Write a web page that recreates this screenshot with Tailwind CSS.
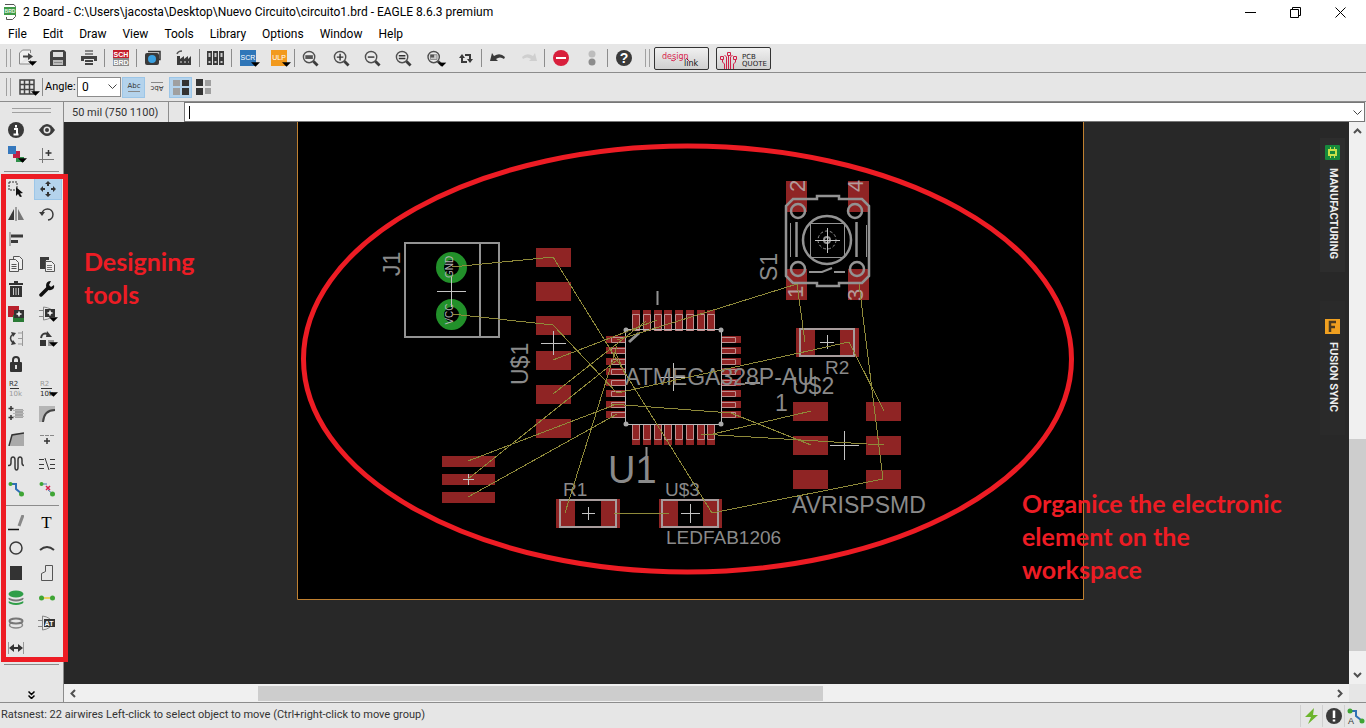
<!DOCTYPE html>
<html lang="en">
<head>
	<meta charset="UTF-8">
	<meta name="viewport" content="width=device-width, initial-scale=1.0">
	<title>2 Board - EAGLE 8.6.3 premium</title>
	<script src="https://cdn.jsdelivr.net/npm/@tailwindcss/browser@4"></script>
</head>
<body class="h-screen flex flex-col overflow-hidden bg-[#e6e6e6] text-black font-['Roboto',sans-serif] text-[12px]">

<!-- shared shapes -->
<svg class="hidden">
	<symbol id="drop" viewBox="0 0 10 5"><path d="M0 0h10L5 5z" fill="#000"/></symbol>
	<symbol id="lens" viewBox="0 0 18 18">
		<circle cx="7.500" cy="7.500" r="6" fill="#eaeaea" stroke="#505050" stroke-width="1.500"/>
		<path d="M12 12l4.500 4.500" stroke="#3c3c3c" stroke-width="3"/>
	</symbol>
</svg>

<!-- title bar -->
<header class="h-6 shrink-0 flex items-center bg-white pl-1">
	<svg class="w-3 h-4 mr-[7px]" viewBox="0 0 12 16"><path d="M1 .5h9l1.500 2v10l-3 3H2.500V13" fill="#fff" stroke="#555"/><path d="M0 3h12v8H0z" fill="#3f9a48"/><text x="6" y="9" font-size="5" font-weight="bold" fill="#e4f7e4" text-anchor="middle" font-family="Liberation Sans, sans-serif">BRD</text></svg>
	<h1 class="grow whitespace-pre">2 Board - C:\Users\jacosta\Desktop\Nuevo Circuito\circuito1.brd - EAGLE 8.6.3 premium</h1>
	<button aria-label="Minimize" class="w-[45px] h-6 flex items-center justify-center"><svg width="11" height="11"><path d="M0 5.500h11" stroke="#000"/></svg></button>
	<button aria-label="Restore" class="w-[45px] h-6 flex items-center justify-center"><svg width="11" height="11" fill="none" stroke="#000"><path d="M.5 2.500h8v8h-8zM2.500 2.500v-2h8v8h-2"/></svg></button>
	<button aria-label="Close" class="w-[45px] h-6 mr-[3px] flex items-center justify-center"><svg width="11" height="11" stroke="#000"><path d="M.5 .5l10 10M10.500 .5l-10 10"/></svg></button>
</header>

<nav class="h-5 shrink-0 flex items-center bg-white pl-2 gap-4">
	<a href="#">File</a>
	<a href="#">Edit</a>
	<a href="#">Draw</a>
	<a href="#">View</a>
	<a href="#">Tools</a>
	<a href="#">Library</a>
	<a href="#">Options</a>
	<a href="#">Window</a>
	<a href="#">Help</a>
</nav>

<!-- action toolbar -->
<div class="h-[29px] shrink-0 flex items-center border-b border-[#8c8c8c] *:shrink-0">
	<span class="ml-[6px] mr-0 w-[5px] h-[18px] border-x border-[#a0a0a0]"></span>
	<button aria-label="Open" class="w-[31px] pl-[3px] flex justify-center"><svg width="20" height="18" viewBox="0 0 20 18"><path d="M1.500 15V4l3-3h8v3M12.500 11v4h-11" fill="#f0f0f0" stroke="#888"/><path d="M5 6.500h5V4l5 3.500-5 3.500V8.500H5z" fill="#444"/><use href="#drop" x="10" y="12" width="9" height="5"/></svg></button>
	<button aria-label="Save" class="w-[31px] flex justify-center"><svg width="16" height="16"><path d="M0 2L2 0h12l2 2v14H0z" fill="#444"/><path d="M3 2h10v5H3z" fill="#ddd"/><path d="M3 10h10v5H3z" fill="#bbb"/><path d="M4 12.500h8" stroke="#888"/></svg></button>
	<button aria-label="Print" class="w-[31px] flex justify-center"><svg width="16" height="16"><path d="M4 1h8M4 4h8" stroke="#888" stroke-width="2"/><path d="M0 6h16v5h-3V9H3v2H0z" fill="#444"/><path d="M4 11h8M4 14h8" stroke="#444" stroke-width="2"/></svg></button>
	<span class="w-px h-[18px] bg-[#8c8c8c]"></span>
	<button aria-label="Schematic" class="w-[31px] flex justify-center"><svg width="16" height="16" font-family="Liberation Sans, sans-serif" font-size="7" font-weight="bold" fill="#fff" text-anchor="middle"><path d="M0 0h16v8H0z" fill="#c6202c"/><path d="M0 8h16v8H0z" fill="#8a8a8a"/><text x="8" y="7">SCH</text><text x="8" y="15">BRD</text></svg></button>
	<span class="w-px h-[18px] bg-[#8c8c8c]"></span>
	<button aria-label="CAM processor" class="w-[31px] flex justify-center"><svg width="16" height="16"><path d="M3 1.500h12v8h-2" fill="none" stroke="#333" stroke-width="1.500"/><rect y="3" width="14" height="12" rx="2" fill="#3a3a3a"/><circle cx="7" cy="9" r="4" fill="#3aa0e0"/></svg></button>
	<button aria-label="Manufacturing" class="w-[31px] flex justify-center"><svg width="16" height="16"><path d="M1 15V6h3v3l4-3v3l4-3v3l3-3v9z" fill="#3a3a3a"/><path d="M1 4q1-3 5-3" stroke="#555" fill="none" stroke-width="1.500"/><path d="M4 12h2M8 12h2M12 12h1" stroke="#ddd"/></svg></button>
	<span class="w-px h-[18px] bg-[#8c8c8c]"></span>
	<button aria-label="Library manager" class="w-[31px] flex justify-center"><svg width="17" height="14"><path d="M0 0h5v14H0zM6 0h5v14H6zM12 0h5v14h-5z" fill="#3a3a3a"/><path d="M2.500 2v4M8.500 2v4M14.500 2v4M2.500 10v2M8.500 10v2M14.500 10v2" stroke="#ccc" stroke-width="2"/></svg></button>
	<span class="w-px h-[18px] bg-[#8c8c8c]"></span>
	<button aria-label="Run script" class="w-[31px] pl-1 flex justify-center"><svg width="20" height="17"><path d="M0 0h16v16H0z" fill="#2f76b8"/><text x="8" y="10" font-size="7" fill="#fff" text-anchor="middle" font-family="Liberation Sans, sans-serif">SCR</text><use href="#drop" x="11" y="12" width="9" height="5"/></svg></button>
	<button aria-label="Run ULP" class="w-[31px] pl-1 flex justify-center"><svg width="20" height="17"><path d="M0 0h16v16H0z" fill="#f29a1e"/><text x="8" y="10" font-size="7" fill="#fff" text-anchor="middle" font-family="Liberation Sans, sans-serif">ULP</text><use href="#drop" x="11" y="12" width="9" height="5"/></svg></button>
	<span class="w-px h-[18px] bg-[#8c8c8c]"></span>
	<button aria-label="Zoom to fit" class="w-[31px] flex justify-center"><svg width="17" height="17" viewBox="0 0 18 18"><use href="#lens"/><path d="M3.500 5.500h8v4h-8z" fill="#555"/></svg></button>
	<button aria-label="Zoom in" class="w-[31px] flex justify-center"><svg width="17" height="17" viewBox="0 0 18 18"><use href="#lens"/><path d="M4 7.500h7M7.500 4v7" stroke="#333" stroke-width="1.500"/></svg></button>
	<button aria-label="Zoom out" class="w-[31px] flex justify-center"><svg width="17" height="17" viewBox="0 0 18 18"><use href="#lens"/><path d="M4 7.500h7" stroke="#333" stroke-width="1.500"/></svg></button>
	<button aria-label="Zoom redraw" class="w-[31px] flex justify-center"><svg width="17" height="17" viewBox="0 0 18 18"><use href="#lens"/><path d="M4 6h7M4 9h7" stroke="#333" stroke-width="1.500"/></svg></button>
	<button aria-label="Zoom select" class="w-[31px] pl-1 flex justify-center"><svg width="21" height="17" viewBox="0 0 21 18"><use href="#lens" width="18" height="18"/><path d="M4 5h7v5H4z" fill="#ccc" stroke="#888"/><path d="M4 5h4v3H4z" fill="#555"/><use href="#drop" x="12" y="13" width="9" height="5"/></svg></button>
	<button aria-label="Refresh" class="w-[31px] flex justify-center"><svg width="14" height="13" fill="none" stroke="#3a3a3a" stroke-width="2"><path d="M3 5v5h5M11 8V3H6"/><path d="M0 6l3-4 3 4zM8 7l3 4 3-4z" fill="#3a3a3a" stroke="none"/></svg></button>
	<span class="w-px h-[18px] bg-[#8c8c8c]"></span>
	<button aria-label="Undo" class="w-[31px] flex justify-center"><svg width="16" height="12"><path d="M0 9l2-8 2 3q6-4 11 1l-1 2q-4-3-8 0l2 2z" fill="#3a3a3a"/></svg></button>
	<button aria-label="Redo" class="w-[31px] flex justify-center"><svg width="16" height="12"><path d="M16 9l-2-8-2 3Q6 0 1 5l1 2q4-3 8 0L8 9z" fill="#cfcfcf"/></svg></button>
	<span class="w-px h-[18px] bg-[#8c8c8c]"></span>
	<button aria-label="Stop" class="w-[31px] flex justify-center"><svg width="16" height="16"><circle cx="8" cy="8" r="8" fill="#d81f3c"/><path d="M3 8h10" stroke="#fff" stroke-width="2"/></svg></button>
	<button aria-label="Go" class="w-[31px] flex justify-center"><svg width="8" height="16"><circle cx="4" cy="4" r="3.500" fill="#bdbdbd"/><circle cx="4" cy="12" r="3.500" fill="#8c8c8c"/></svg></button>
	<span class="w-px h-[18px] bg-[#8c8c8c]"></span>
	<button aria-label="Help" class="w-[31px] flex justify-center"><svg width="16" height="16"><circle cx="8" cy="8" r="8" fill="#3a3a3a"/><text x="8" y="13" font-size="14" font-weight="bold" fill="#fff" text-anchor="middle" font-family="Liberation Sans, sans-serif">?</text></svg></button>
	<span class="ml-[6px] mr-1 w-[5px] h-[18px] border-x border-[#a0a0a0]"></span>
	<button aria-label="Design link" class="w-[55px] h-[23px] border border-[#333] rounded-[2px] bg-linear-to-b from-[#f0f0f0] to-[#d0d0d0]"><svg width="53" height="21" font-family="DejaVu Sans, sans-serif" font-size="8"><text x="7" y="11" fill="#d81f4c">design</text><path d="M16 12q3 2 5-1M31 10l3 3" stroke="#d81f4c" fill="none"/><text x="29" y="18" fill="#111">link</text></svg></button>
	<button aria-label="PCB quote" class="ml-[7px] w-[55px] h-[23px] border border-[#333] rounded-[2px] bg-linear-to-b from-[#f0f0f0] to-[#d0d0d0]"><svg width="53" height="21" font-family="DejaVu Sans, sans-serif" font-size="7" fill="#222"><g fill="none" stroke="#d02048"><path d="M5.500 12v2l2 2v5M9.500 21V9l-2-2M11.500 21V8M13.500 21V9l2-2M18.500 12v2l-2 2v5"/><path d="M3.500 8.500h3v3h-3zM10.500 4.500h3v3h-3zM16.500 8.500h3v3h-3z"/></g><text x="25" y="11">PCB</text><text x="25" y="18">QUOTE</text></svg></button>
</div>

<!-- parameter toolbar -->
<div class="h-[29px] shrink-0 flex items-center border-b border-[#8c8c8c] *:shrink-0">
	<span class="ml-[6px] w-[5px] h-[18px] border-x border-[#a0a0a0]"></span>
	<button aria-label="Grid" class="w-[31px] pl-[5px] flex justify-center"><svg width="22" height="17"><path d="M2 1h14v14H2zM6.500 1v14M11.500 1v14M2 5.500h14M2 10.500h14" fill="none" stroke="#444" stroke-width="1.500"/><use href="#drop" x="13" y="12" width="9" height="5"/></svg></button>
	<span class="w-px h-[18px] bg-[#8c8c8c]"></span>
	<label for="angle" class="w-[34px] pl-[2px] text-[11px]">Angle:</label>
	<div class="relative">
		<select id="angle" class="appearance-none block w-[44px] h-5 border border-[#8c8c8c] bg-white pl-1"><option>0</option></select>
		<svg class="absolute right-1 top-[7px] pointer-events-none" width="9" height="6"><path d="M.5 .5l4 4 4-4" fill="none" stroke="#444"/></svg>
	</div>
	<button aria-label="Normal text" class="ml-px w-[23px] h-[21px] bg-[#b4d3ec] border border-[#9cc6e8] flex justify-center items-center"><svg width="16" height="13"><text x="8" y="7" font-size="7" fill="#333" text-anchor="middle" font-family="DejaVu Sans, sans-serif">Abc</text><path d="M2 10.500h12" stroke="#888"/></svg></button>
	<button aria-label="Spin text" class="w-[23px] h-[21px] flex justify-center items-center"><svg width="16" height="13"><g transform="rotate(180 8 6.500)"><text x="8" y="8" font-size="7" fill="#333" text-anchor="middle" font-family="DejaVu Sans, sans-serif">Abc</text><path d="M2 11.500h12" stroke="#888"/></g></svg></button>
	<button aria-label="Group layout" class="ml-px w-[23px] h-[21px] bg-[#b4d3ec] border border-[#9cc6e8] flex justify-center items-center"><svg width="16" height="16"><path d="M0 1h7v6H0zM0 9h7v7H0z" fill="#a0a0a0"/><path d="M9 1h7v6H9zM9 9h7v7H9z" fill="#333"/></svg></button>
	<button aria-label="Single layout" class="w-[23px] h-[21px] flex justify-center items-center"><svg width="16" height="16"><path d="M0 0h7v7H0zM0 9h7v7H0z" fill="#333"/><path d="M9 1h6v6H9zM9 9h6v6H9z" fill="#a0a0a0"/></svg></button>
</div>

<div class="grow min-h-0 flex">
	<!-- tool palette -->
	<aside class="relative w-16 shrink-0 flex flex-col border-r border-[#8c8c8c]">
		<span class="mx-3 mt-[6px] h-[5px] border-y border-[#a0a0a0]"></span>
		<div class="grid grid-cols-[31px_31px] auto-rows-[25px] mt-1 *:flex *:items-center *:justify-center">
			<button aria-label="Info"><svg width="16" height="16"><circle cx="8" cy="8" r="8" fill="#3a3a3a"/><path d="M6 7h3v5M5.500 12.500h5M8 3v2.500" fill="none" stroke="#fff" stroke-width="2"/></svg></button>
			<button aria-label="Show"><svg width="16" height="12"><path d="M0 6q8-12 16 0q-8 12-16 0z" fill="#3a3a3a"/><circle cx="8" cy="6" r="3.500" fill="#e6e6e6"/><circle cx="8" cy="6" r="2" fill="#3a3a3a"/></svg></button>
			<button aria-label="Layers" class="pl-1"><svg width="20" height="18"><path d="M8 11h8v5H8z" fill="#2f8f4a"/><path d="M5 5h7v7H5z" fill="#c22045"/><path d="M0 0h8v8H0z" fill="#3578bd"/><use href="#drop" x="10" y="12" width="9" height="5"/></svg></button>
			<button aria-label="Mark"><svg width="16" height="16" fill="none"><path d="M3.500 1v15M0 12.500h15" stroke="#777"/><path d="M9.500 3v6M6.500 6h6" stroke="#333" stroke-width="1.500"/></svg></button>
		</div>
		<span class="mx-1 my-1 h-px bg-[#8c8c8c]"></span>
		<div class="grid grid-cols-[31px_31px] auto-rows-[25px] *:flex *:items-center *:justify-center">
			<button aria-label="Group"><svg width="16" height="16"><path d="M1 1h8v8H1z" fill="none" stroke="#333" stroke-dasharray="2 1"/><path d="M8 6l7 6-3 .5 2 3-2 .5-2-3-2 2z" fill="#111"/></svg></button>
			<button aria-label="Move" class="bg-[#b4d3ec] border border-[#9cc6e8] ml-[3px] mt-[2px] mb-px"><svg width="16" height="16" fill="#333"><path d="M8 0l3 3H9v2H7V3H5zM8 16l-3-3h2v-2h2v2h2zM0 8l3-3v2h2v2H3v2zM16 8l-3 3V9h-2V7h2V5z"/></svg></button>
			<button aria-label="Mirror"><svg width="16" height="14"><path d="M0 13L6 2v11z" fill="#3a3a3a"/><path d="M8 0v14" stroke="#555"/><path d="M16 13L10 2v11z" fill="#777"/></svg></button>
			<button aria-label="Rotate"><svg width="16" height="16"><path d="M3 8a5.500 5.500 0 1 1 6 6" fill="none" stroke="#3a3a3a" stroke-width="1.500"/><path d="M0 6h6L3 10z" fill="#3a3a3a"/></svg></button>
			<button aria-label="Align" class="col-span-2 pr-[31px]"><svg width="16" height="14"><path d="M2 0v14" stroke="#777"/><path d="M3 4h12M3 9.500h7" stroke="#3a3a3a" stroke-width="3"/></svg></button>
			<button aria-label="Copy"><svg width="14" height="16" fill="#eee" stroke="#555"><path d="M4.500 .5h6l3 3v10h-9z"/><path d="M.5 3.500h6l3 3v9h-9z"/><path d="M2.500 8.500h5M2.500 10.500h5M2.500 12.500h5"/></svg></button>
			<button aria-label="Paste"><svg width="16" height="16"><path d="M1 1h9v3h-3v9H1z" fill="#3a3a3a"/><path d="M6.500 5.500h6l3 3v7h-9z" fill="#eee" stroke="#555"/><path d="M8 9.500h5M8 11.500h5M8 13.500h5" stroke="#777"/></svg></button>
			<button aria-label="Delete"><svg width="14" height="16" fill="#333"><path d="M5 0h4v2h5v2H0V2h5zM1 5h12v11H1z"/><path d="M4.500 7v7M7 7v7M9.500 7v7" stroke="#ccc"/></svg></button>
			<button aria-label="Change"><svg width="16" height="16"><path d="M2 14l7-7" stroke="#111" stroke-width="3.500" stroke-linecap="round"/><path d="M15 4l-3 2-2-2 2-4q-5 0-5 5 1 5 5 4 4-1 3-5z" fill="#111"/></svg></button>
			<button aria-label="Add part"><svg width="16" height="16"><path d="M0 0h11v11H0z" fill="#b8202c"/><path d="M5 9h11v7H5z" fill="#2a7a35"/><path d="M6 4h10v8H6z" fill="#333"/><path d="M11 5.500v5M8.500 8h5" stroke="#fff" stroke-width="1.500"/></svg></button>
			<button aria-label="Add gate" class="pl-1"><svg width="20" height="17"><path d="M0 5.500h5M0 11.500h5M4.500 2v13q9-1 10-7-1-5-10-6" fill="none" stroke="#888"/><path d="M6 4h10v8H6z" fill="#333"/><path d="M11 5.500v5M8.500 8h5" stroke="#fff" stroke-width="1.500"/><use href="#drop" x="10" y="12" width="9" height="5"/></svg></button>
			<button aria-label="Pin swap"><svg width="16" height="15" fill="none"><path d="M5 3Q0 7 5 12" stroke="#3a3a3a" stroke-width="1.500"/><path d="M3 1l5 1-3 4zM3 14l5-1-3-4z" fill="#3a3a3a"/><path d="M14.500 0v15M10 2h5M10 7.500h5M10 13h5" stroke="#999"/></svg></button>
			<button aria-label="Replace" class="pl-1"><svg width="20" height="16"><path d="M2 7q1-6 7-4" fill="none" stroke="#3a3a3a" stroke-width="2"/><path d="M8 0l5 6H7z" fill="#3a3a3a"/><path d="M1 9h6v6H1z" fill="#333"/><path d="M9 9h6v6H9z" fill="#999"/><use href="#drop" x="10" y="11" width="9" height="5"/></svg></button>
			<button aria-label="Lock" class="col-span-2 pr-[31px]"><svg width="12" height="16"><path d="M3 7V4q0-3 3-3t3 3v3" fill="none" stroke="#333" stroke-width="2"/><rect y="6" width="12" height="10" rx="1" fill="#333"/><path d="M6 9v4" stroke="#ddd" stroke-width="2"/></svg></button>
			<button aria-label="Name"><svg width="16" height="17" font-size="7" font-family="DejaVu Sans, sans-serif"><text x="1" y="6" fill="#333">R2</text><path d="M2 8.500h9" stroke="#333"/><text x="1" y="16" fill="#999">10k</text></svg></button>
			<button aria-label="Value" class="pl-1"><svg width="20" height="17" font-size="7" font-family="DejaVu Sans, sans-serif"><text x="1" y="6" fill="#999">R2</text><path d="M2 8.500h11" stroke="#333"/><text x="1" y="16" fill="#222">10k</text><use href="#drop" x="10" y="12" width="9" height="5"/></svg></button>
			<button aria-label="Smash"><svg width="16" height="16"><path d="M3 0v5M.5 2.500h5M3 9v5M.5 11.500h5" stroke="#333" stroke-width="1.500"/><path d="M7 3h8v9H7z" fill="#a5a5a5"/><path d="M5 4.500h11M5 7.500h11M5 10.500h11" stroke="#b5b5b5"/></svg></button>
			<button aria-label="Miter"><svg width="16" height="16"><path d="M0 0h16v4Q5 5 4 16H0z" fill="#b5b5b5"/><path d="M4 16Q5 4 16 4" fill="none" stroke="#444" stroke-width="2"/></svg></button>
			<button aria-label="Split"><svg width="16" height="14"><path d="M4 2l12-1v13H2z" fill="#aaa"/><path d="M1 14L4 3l12-2" fill="none" stroke="#333" stroke-width="1.500"/></svg></button>
			<button aria-label="Optimize"><svg width="14" height="12"><path d="M0 2.500h4M5 2.500h4M10 2.500h4" stroke="#888"/><path d="M7 5v6M4 8h6" stroke="#333" stroke-width="1.500"/></svg></button>
			<button aria-label="Meander"><svg width="16" height="16"><path d="M0 9.500h1q2 0 2-3V4q0-3 2-3t2 3v7q0 3 1.500 3t1.500-3V4q0-3 2-3t2 3v2.500q0 3 2 3" fill="none" stroke="#3a3a3a" stroke-width="1.500"/></svg></button>
			<button aria-label="Ripup"><svg width="16" height="14" stroke="#3a3a3a"><path d="M0 2.500h5M0 7.500h5M0 11.500h5M11 2.500h5M11 7.500h5M11 11.500h5M6 1l4 12"/></svg></button>
			<button aria-label="Route"><svg width="16" height="16"><path d="M2 3h6v5l6 5" fill="none" stroke="#2f6fb5" stroke-width="2"/><circle cx="2.500" cy="3" r="2" fill="#3fa535"/><circle cx="13.500" cy="13" r="2.500" fill="#3fa535"/></svg></button>
			<button aria-label="Unroute"><svg width="16" height="16"><path d="M2 3h6M9 9l5 4" stroke="#4a7ab5"/><circle cx="2.500" cy="3" r="2" fill="#3fa535"/><circle cx="13.500" cy="13" r="2.500" fill="#3fa535"/><path d="M7 5l4 4M11 5l-4 4" stroke="#d81f4c" stroke-width="1.500"/></svg></button>
		</div>
		<span class="mx-1 my-1 h-px bg-[#8c8c8c]"></span>
		<div class="grid grid-cols-[31px_31px] auto-rows-[25px] *:flex *:items-center *:justify-center">
			<button aria-label="Line"><svg width="16" height="16"><path d="M11 11l4-11" stroke="#888" stroke-width="3"/><path d="M0 14.500h11" stroke="#111" stroke-width="1.500"/></svg></button>
			<button aria-label="Text" class="font-['Liberation_Serif',serif] text-[17px] leading-[25px]">T</button>
			<button aria-label="Circle"><svg width="14" height="14"><circle cx="7" cy="7" r="6" fill="none" stroke="#3a3a3a" stroke-width="1.500"/></svg></button>
			<button aria-label="Arc"><svg width="16" height="8"><path d="M1 6q7-6 14 0" fill="none" stroke="#3a3a3a" stroke-width="2"/></svg></button>
			<button aria-label="Rectangle"><svg width="12" height="14"><path d="M0 0h12v14H0z" fill="#333"/></svg></button>
			<button aria-label="Polygon"><svg width="14" height="16"><path d="M1.500 15.500h11V.5h-7v6l-4 2z" fill="none" stroke="#555"/></svg></button>
			<button aria-label="Via"><svg width="16" height="16"><ellipse cx="8" cy="12" rx="7.500" ry="3" fill="#2f9e48"/><ellipse cx="8" cy="10" rx="7.500" ry="3" fill="#e6e6e6"/><ellipse cx="8" cy="8.500" rx="7.500" ry="3" fill="#777"/><ellipse cx="8" cy="6.500" rx="7.500" ry="3" fill="#e6e6e6"/><ellipse cx="8" cy="4" rx="7.500" ry="3.500" fill="#2f9e48"/></svg></button>
			<button aria-label="Signal"><svg width="16" height="8"><path d="M3 4h10" stroke="#e8c830" stroke-width="1.500"/><circle cx="2.500" cy="4" r="2.500" fill="#3fa535"/><circle cx="13.500" cy="4" r="2.500" fill="#3fa535"/></svg></button>
			<button aria-label="Hole"><svg width="16" height="12"><ellipse cx="8" cy="8" rx="6.500" ry="3" fill="none" stroke="#888" stroke-width="1.500"/><ellipse cx="8" cy="4" rx="6.500" ry="2.500" fill="#e6e6e6" stroke="#777" stroke-width="2"/></svg></button>
			<button aria-label="Attribute"><svg width="17" height="16"><path d="M0 5.500h5M0 11.500h5M4.500 1v14q8-1 10-7-2-6-10-7" fill="none" stroke="#888"/><path d="M6 4h11v8H6z" fill="#333"/><text x="11" y="11" font-size="7" font-weight="bold" fill="#fff" text-anchor="middle" font-family="Liberation Sans, sans-serif">AT</text></svg></button>
			<button aria-label="Dimension" class="col-span-2 pr-[31px]"><svg width="16" height="12"><path d="M.5 0v12M15.500 0v12" stroke="#999"/><path d="M4 6h8" stroke="#333" stroke-width="2"/><path d="M1 6l5-4v8zM15 6l-5-4v8z" fill="#333"/></svg></button>
		</div>
		<span class="mx-1 my-1 h-px bg-[#8c8c8c]"></span>
		<button aria-label="More tools" class="mt-auto mb-[3px] self-center"><svg width="7" height="8" fill="none" stroke="#000" stroke-width="1.500"><path d="M.5 .5l3 3 3-3M.5 4.500l3 3 3-3"/></svg></button>
		<span class="absolute left-px top-[72px] z-10 w-[67px] h-[488px] border-[5px] border-[#ed1c24] pointer-events-none"></span>
	</aside>

	<main class="grow min-w-0 flex flex-col">
		<div class="h-5 shrink-0 flex">
			<output class="w-[105px] pl-2 border-r border-[#8c8c8c] text-[#333] text-[11px] leading-[22px] whitespace-nowrap">50 mil (750 1100)</output>
			<div class="relative grow ml-[15px] mr-px">
				<input aria-label="Command line" class="block w-full h-5 border border-[#777] bg-white px-1">
				<span class="absolute left-[5px] top-1 w-px h-[13px] bg-black"></span>
				<svg class="absolute right-[3px] top-2" width="9" height="6"><path d="M.5 .5l4 4 4-4" fill="none" stroke="#444"/></svg>
			</div>
		</div>

		<div class="grow min-h-0 flex">
			<div class="relative grow min-w-0 bg-[#282828] overflow-hidden">
				<svg class="absolute inset-0 size-full" font-family="Liberation Sans, sans-serif">
					<g transform="translate(-64 -122)">
						<path d="M297.500 120v479.500h786V120" fill="#000" stroke="#c08030"/>

						<!-- pads -->
						<g fill="#8f2424">
							<path d="M536 248h35v19h-35zM536 282h35v19h-35zM536 316h35v19h-35zM536 351h35v19h-35zM536 385h35v19h-35zM536 419h35v19h-35z"/>
							<path d="M442 456h53v11h-53zM442 474h53v11h-53zM442 492h53v11h-53z"/>
							<path d="M556 499h19v29h-19zM601 499h19v29h-19zM659 499h19v29h-19zM703 499h19v29h-19zM796 328h19v29h-19zM840 328h19v29h-19z"/>
							<path d="M793 402h35v19h-35zM793 436h35v19h-35zM793 470h35v19h-35zM866 402h35v19h-35zM866 436h35v19h-35zM866 470h35v19h-35z"/>
							<path d="M786 181h21v31h-21zM848 181h21v31h-21zM786 269h21v31h-21zM848 269h21v31h-21z"/>
							<path d="M632 310h8v21h-8zM643 310h8v21h-8zM654 310h8v21h-8zM664 310h8v21h-8zM675 310h8v21h-8zM686 310h8v21h-8zM697 310h8v21h-8zM707 310h8v21h-8z"/>
							<path d="M632 424h8v21h-8zM643 424h8v21h-8zM654 424h8v21h-8zM664 424h8v21h-8zM675 424h8v21h-8zM686 424h8v21h-8zM697 424h8v21h-8zM707 424h8v21h-8z"/>
							<path d="M606 336h20v7h-20zM606 347h20v7h-20zM606 358h20v7h-20zM606 368h20v7h-20zM606 379h20v7h-20zM606 390h20v7h-20zM606 401h20v7h-20zM606 411h20v7h-20z"/>
							<path d="M721 336h20v7h-20zM721 347h20v7h-20zM721 358h20v7h-20zM721 368h20v7h-20zM721 379h20v7h-20zM721 390h20v7h-20zM721 401h20v7h-20zM721 411h20v7h-20z"/>
						</g>
						<g fill="#000" stroke="#22902a" stroke-width="8"><circle cx="451.500" cy="267.500" r="11.500"/><circle cx="451.500" cy="314.500" r="11.500"/></g>

						<!-- pin outlines of the controller -->
						<g fill="none" stroke="#c09090">
							<path d="M632.500 314.500h7v16h-7zM643.500 314.500h7v16h-7zM654.500 314.500h7v16h-7zM664.500 314.500h7v16h-7zM675.500 314.500h7v16h-7zM686.500 314.500h7v16h-7zM697.500 314.500h7v16h-7zM707.500 314.500h7v16h-7z"/>
							<path d="M632.500 424.500h7v15h-7zM643.500 424.500h7v15h-7zM654.500 424.500h7v15h-7zM664.500 424.500h7v15h-7zM675.500 424.500h7v15h-7zM686.500 424.500h7v15h-7zM697.500 424.500h7v15h-7zM707.500 424.500h7v15h-7z"/>
							<path d="M611.500 337.500h14v5h-14zM611.500 348.500h14v5h-14zM611.500 359.500h14v5h-14zM611.500 369.500h14v5h-14zM611.500 380.500h14v5h-14zM611.500 391.500h14v5h-14zM611.500 402.500h14v5h-14zM611.500 412.500h14v5h-14z"/>
							<path d="M721.500 337.500h14v5h-14zM721.500 348.500h14v5h-14zM721.500 359.500h14v5h-14zM721.500 369.500h14v5h-14zM721.500 380.500h14v5h-14zM721.500 391.500h14v5h-14zM721.500 402.500h14v5h-14zM721.500 412.500h14v5h-14z"/>
						</g>

						<!-- package outlines -->
						<g fill="none" stroke="#939393" stroke-width="2">
							<path d="M405 243h94v94h-94zM480 243v94"/>
							<path d="M560 500h56v27h-56zM662 500h56v27h-56zM800 329h54v27h-54z" stroke="#a89c9c"/>
							<path d="M625.500 329.500h96v95h-96z" stroke="#bbb" stroke-width="1"/>
							<path d="M657.500 291v14M646.500 447v17M745 383h15"/>
							<path d="M629 342l10-9" stroke-width="3"/>
							<g stroke-width="2.500">
								<path d="M793 199h24v-3h22v3h23l7 7v70l-7 7h-23v3h-22v-3h-24l-7-7v-70z"/>
								<circle cx="798" cy="211" r="7"/><circle cx="855" cy="211" r="7"/>
								<circle cx="798" cy="269" r="7"/><circle cx="857" cy="269" r="7"/>
								<circle cx="827" cy="240" r="24"/>
								<path d="M796.500 222v35M856.500 222v35"/>
							</g>
							<path d="M810.500 223.500h34v34h-34zM790.500 223v34M866.500 225v32" stroke-width="1"/>
							<path d="M809 272h13l10-4M834 272h11"/>
							<circle cx="827" cy="240" r="9" stroke-width="1" stroke-dasharray="3 2"/>
							<circle cx="827" cy="240" r="3"/>
						</g>
						<g fill="#aaa"><circle cx="626" cy="330" r="2.500"/><circle cx="721" cy="330" r="2.500"/><circle cx="626" cy="424" r="2.500"/><circle cx="721" cy="424" r="2.500"/></g>

						<!-- origins -->
						<path d="M437 291.500h29M451.500 277v30M541 343.500h25M553.500 331v24M463 479.500h11M468.500 474v11M582 513.500h13M588.500 507v13M681 513.500h19M690.500 504v19M659 377.500h29M673.500 363v28M820 342.500h14M827.500 335v14M830 445.500h29M844.500 431v29M815 240.500h25M827.500 228v25" stroke="#c4c4c4" fill="none"/>

						<!-- part names and values -->
						<g fill="#8a8a8a" font-size="23">
							<text transform="translate(400 276) rotate(-90)">J1</text>
							<text transform="translate(528 385) rotate(-90)">U$1</text>
							<text transform="translate(777 281) rotate(-90)">S1</text>
							<text x="625" y="385">ATMEGA328P-AU</text>
							<text x="792" y="394">U$2</text>
							<text x="775" y="411">1</text>
							<text x="792" y="513">AVRISPSMD</text>
							<text x="608" y="483" font-size="38">U1</text>
							<g font-size="19">
								<text x="563" y="496">R1</text>
								<text x="665" y="496">U$3</text>
								<text x="825" y="374">R2</text>
								<text x="666" y="544">LEDFAB1206</text>
							</g>
							<g font-size="22" fill="#b39a9a">
								<text transform="translate(805 192) rotate(-90)">2</text>
								<text transform="translate(863 192) rotate(-90)">4</text>
								<text transform="translate(803 298) rotate(-90)">1</text>
								<text transform="translate(863 301) rotate(-90)">3</text>
							</g>
							<g font-size="10" fill="#b5b5b5" text-anchor="middle">
								<text transform="translate(453 267) rotate(-90)">GND</text>
								<text transform="translate(453 314) rotate(-90)">VCC</text>
							</g>
						</g>

						<!-- airwires -->
						<g fill="none" stroke="#8f8a3a" shape-rendering="crispEdges">
							<path d="M452 267L553 257L712 513L883 479L859 284"/>
							<path d="M452 314L553 325L617 393L849 342L884 411"/>
							<path d="M553 360L657 320M553 394L646 321M468 479L617 360M468 461L617 404M468 497L617 414"/>
							<path d="M565 513L617 346M615 351L625 374M614 513H669"/>
							<path d="M617 340L797 284L805 342"/>
							<path d="M611 404L731 413L811 445M701 434L884 445M701 434H713L811 411"/>
						</g>

						<!-- callouts -->
						<ellipse cx="687.500" cy="359" rx="384" ry="213" fill="none" stroke="#ed1c24" stroke-width="5"/>
						<g fill="#ed1c24" font-family="Lato, sans-serif" font-weight="bold" font-size="25">
							<text x="84" y="271">Designing</text>
							<text x="84" y="304">tools</text>
							<text x="1022" y="513">Organice the electronic</text>
							<text x="1022" y="546">element on the</text>
							<text x="1022" y="579">workspace</text>
						</g>
					</g>
				</svg>
				<div class="absolute right-1 top-4 flex flex-col gap-[29px] font-bold text-[11px] text-[#eee]">
					<button class="w-[25px] h-[134px] bg-[#2d2d2d] [writing-mode:vertical-rl] flex items-center gap-2 pt-[7px]"><svg class="shrink-0" width="15" height="15"><rect width="15" height="15" rx="1" fill="#168a3c"/><path d="M4 5h7v5H4z" fill="none" stroke="#c8e04a" stroke-width="2"/><path d="M5.500 2v2M9.500 2v2M5.500 11v2M9.500 11v2" stroke="#c8e04a"/></svg>MANUFACTURING</button>
					<button class="w-[25px] h-[134px] bg-[#2a2a2a] [writing-mode:vertical-rl] flex items-center gap-2 pt-[18px]"><svg class="shrink-0" width="15" height="15"><path d="M0 0h15v15H0z" fill="#f0a020"/><path d="M5 13V3h6M5 8h5" fill="none" stroke="#4a3a20" stroke-width="2.500"/></svg>FUSION SYNC</button>
				</div>
			</div>
			<!-- vertical scroll bar -->
			<div class="w-[17px] shrink-0 bg-[#f0f0f0] flex flex-col items-center justify-between py-[6px]">
				<svg class="shrink-0" width="9" height="6"><path d="M1 5l3.500-3.500L8 5" fill="none" stroke="#505050" stroke-width="2"/></svg>
				<div class="grow w-full flex flex-col justify-end pb-[21px]"><span class="h-[41%] w-full bg-[#cdcdcd]"></span></div>
				<svg class="shrink-0" width="9" height="6"><path d="M1 1l3.500 3.500L8 1" fill="none" stroke="#505050" stroke-width="2"/></svg>
			</div>
		</div>
		<!-- horizontal scroll bar -->
		<div class="h-[18px] shrink-0 flex">
			<div class="grow bg-[#f0f0f0] flex items-center px-[6px]">
				<svg class="shrink-0" width="6" height="9"><path d="M5 1L1.500 4.500 5 8" fill="none" stroke="#505050" stroke-width="2"/></svg>
				<div class="grow h-[15px]"><div class="ml-[14.4%] w-[44.8%] h-full bg-[#cdcdcd]"></div></div>
				<svg class="shrink-0" width="6" height="9"><path d="M1 1l3.500 3.500L1 8" fill="none" stroke="#505050" stroke-width="2"/></svg>
			</div>
			<div class="w-[17px]"></div>
		</div>
	</main>
</div>

<!-- status bar -->
<footer class="h-[26px] shrink-0 flex items-center border-t border-[#8c8c8c] pl-px text-[11px] text-[#333]">
	<p class="grow">Ratsnest: 22 airwires Left-click to select object to move (Ctrl+right-click to move group)</p>
	<span class="w-[22px] h-[22px] border-l border-[#d0d0d0] flex items-center justify-center"><svg width="14" height="16"><path d="M9 0L0 9h6l-3 7 10-9H8z" fill="#6cb52d"/></svg></span>
	<span class="w-[22px] h-[22px] border-l border-[#d0d0d0] flex items-center justify-center"><svg width="16" height="16"><circle cx="8" cy="8" r="8" fill="#3a3a3a"/><path d="M8 2.500V10M8 11.500v2" stroke="#fff" stroke-width="2.500"/></svg></span>
	<span class="w-[22px] h-[22px] border-l border-[#d0d0d0] flex items-center justify-center"><svg width="18" height="18"><path d="M3 4h6v5l5 4" fill="none" stroke="#2f6fb5" stroke-width="2"/><circle cx="3" cy="4" r="2.500" fill="#3fa535"/><circle cx="15" cy="14" r="2.500" fill="#3fa535"/><text x="1" y="17" font-size="9" fill="#333" font-family="Liberation Sans, sans-serif">A</text></svg></span>
</footer>

</body>
</html>
